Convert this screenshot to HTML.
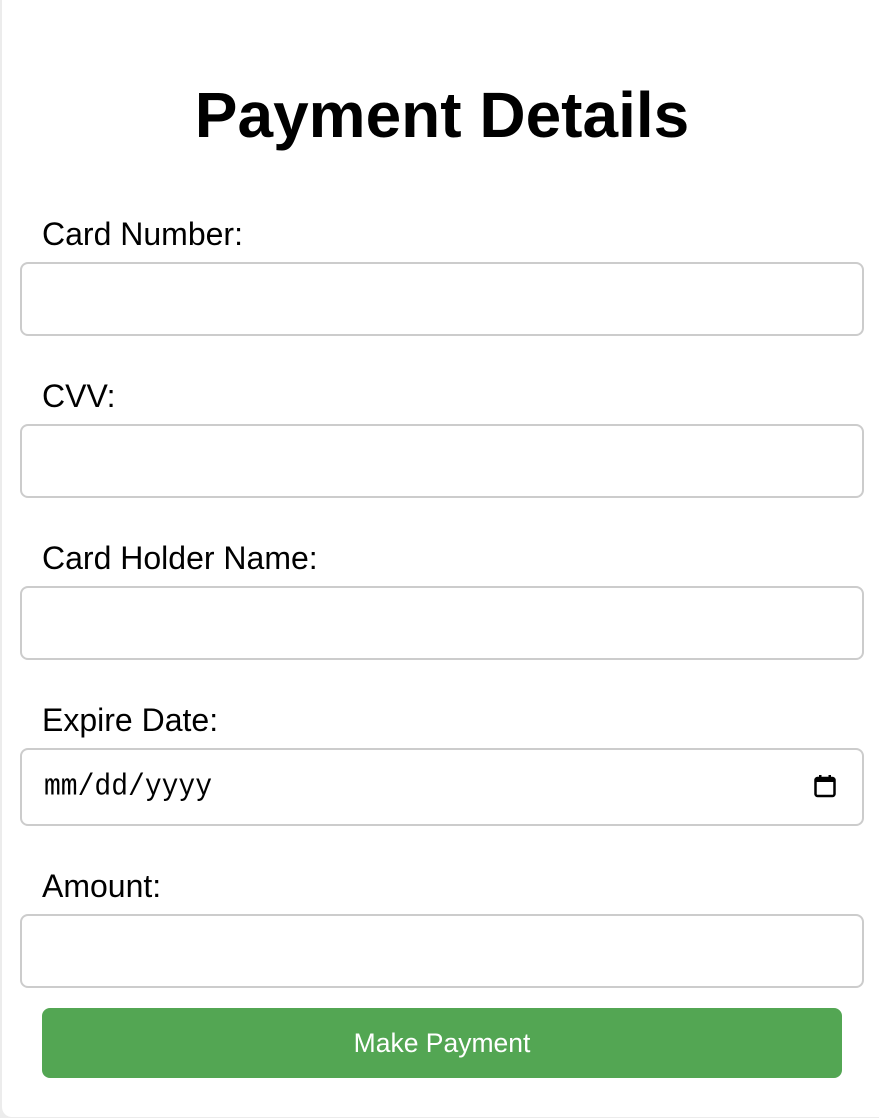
<!DOCTYPE html>
<html><head><meta charset="utf-8"><style>
html,body{margin:0;padding:0;width:879px;height:1118px;background:#ececec;overflow:hidden;font-family:"Liberation Sans",Arial,sans-serif;}
.card{position:absolute;left:2px;top:-10px;width:900px;height:1127px;background:#fff;border-radius:10px;}
h1{position:absolute;left:0;width:884px;top:79px;margin:0;text-align:center;font-size:64px;line-height:72px;font-weight:bold;color:#000;}
.lbl{position:absolute;left:42px;font-size:32px;line-height:32px;color:#000;}
.inp{position:absolute;left:20px;width:840px;height:70px;border:2px solid #ccc;border-radius:8px;background:#fff;}
.date{position:absolute;left:44px;top:771px;font-family:"Liberation Mono","DejaVu Sans Mono",monospace;font-size:28px;line-height:34px;color:#000;transform:scaleY(1.1);}
.btn{position:absolute;left:42px;top:1008px;width:800px;height:70px;background:#53a653;border-radius:8px;color:#fff;font-size:26.5px;line-height:70px;text-align:center;}
</style></head><body>
<div class="card"></div>
<h1>Payment Details</h1>
<div class="lbl" style="top:218px">Card Number:</div>
<div class="inp" style="top:262px"></div>
<div class="lbl" style="top:380px">CVV:</div>
<div class="inp" style="top:424px"></div>
<div class="lbl" style="top:542px">Card Holder Name:</div>
<div class="inp" style="top:586px"></div>
<div class="lbl" style="top:704px">Expire Date:</div>
<div class="inp" style="top:748px;height:74px"></div>
<div class="date">mm/dd/yyyy</div>
<svg style="position:absolute;left:813px;top:774px" width="24" height="24" viewBox="0 0 24 24"><rect x="2.5" y="4" width="19" height="18" rx="2" fill="none" stroke="#000" stroke-width="2.5"/><rect x="2.5" y="4" width="19" height="4" fill="#000"/><rect x="6" y="1" width="2.5" height="4" fill="#000"/><rect x="15.5" y="1" width="2.5" height="4" fill="#000"/></svg>
<div class="lbl" style="top:870px">Amount:</div>
<div class="inp" style="top:914px"></div>
<div class="btn">Make Payment</div>
</body></html>
